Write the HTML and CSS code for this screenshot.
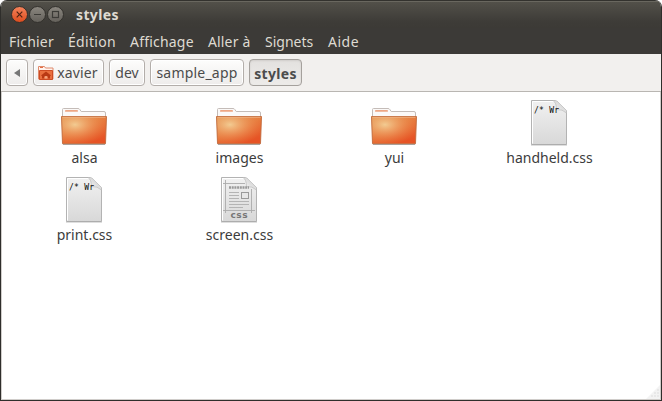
FILE: index.html
```html
<!DOCTYPE html>
<html lang="fr">
<head>
<meta charset="utf-8">
<title>styles</title>
<link rel="stylesheet" href="styles.css">
</head>
<body>
<svg class="defs" width="0" height="0" aria-hidden="true">
  <defs>
    <linearGradient id="folderFill" x1="0" y1="0" x2="0.6" y2="1">
      <stop offset="0" stop-color="#df9853"/><stop offset=".5" stop-color="#e67a3c"/><stop offset="1" stop-color="#e65325"/>
    </linearGradient>
    <radialGradient id="folderGlow" cx=".3" cy=".3" r=".75">
      <stop offset="0" stop-color="#f3cf96" stop-opacity=".95"/><stop offset="1" stop-color="#ef8345" stop-opacity="0"/>
    </radialGradient>
    <linearGradient id="paperFill" x1="0" y1="0" x2="0" y2="1">
      <stop offset="0" stop-color="#f1f1f1"/><stop offset="1" stop-color="#d8d8d8"/>
    </linearGradient>
    <linearGradient id="curl" x1="0" y1="1" x2="1" y2="0">
      <stop offset="0" stop-color="#ffffff"/><stop offset="1" stop-color="#c2c2c2"/>
    </linearGradient>
    <symbol id="folder" viewBox="0 0 48 48">
      <path d="M2.500 22V11.500q0-1 1-1H18q1.300 0 2 1.200l1.200 1.800H44q1.500 0 1.500 1.500v9z" fill="#fbf9f8" stroke="#c4bcb8"/>
      <rect x="5" y="12" width="13" height="1.800" rx=".9" fill="#eda684"/>
      <path d="M1.500 18.500h45l-1 27.200H2.500z" fill="url(#folderFill)"/>
      <path d="M1.500 18.500h45l-1 27.200H2.500z" fill="url(#folderGlow)" stroke="#c06a3c" stroke-width=".9"/>
      <path d="M2.500 19.300h43" stroke="#f0b486" stroke-width=".8"/>
      <path d="M3 46.500h42" stroke="#000" stroke-opacity=".3"/>
    </symbol>
    <symbol id="paper" viewBox="0 0 48 48">
      <path d="M6.500 2.500H30L41.500 13v33.500h-35z" fill="url(#paperFill)" stroke="#b3b3b3"/>
      <path d="M7.500 45.500v-42H29" fill="none" stroke="#fff"/>
      <path d="M28 2.500q3.500 2 3.500 9 6-.5 10 3.500V12.500L32 3q-1-.5-4-.5z" fill="url(#curl)" stroke="#bbb" stroke-width=".7"/>
      <path d="M6 47.300h36" stroke="#000" stroke-opacity=".16"/>
    </symbol>
  </defs>
</svg>
<div class="window">
  <header class="titlebar">
    <svg class="controls" width="54" height="18" viewBox="0 0 54 18">
      <defs>
        <linearGradient id="closeFill" x1="0" y1="0" x2="0" y2="1"><stop offset="0" stop-color="#f5845c"/><stop offset="1" stop-color="#dc4b1d"/></linearGradient>
        <linearGradient id="btnFill" x1="0" y1="0" x2="0" y2="1"><stop offset="0" stop-color="#8b8780"/><stop offset="1" stop-color="#63605a"/></linearGradient>
      </defs>
      <circle cx="9.500" cy="8.500" r="8" fill="url(#closeFill)" stroke="#32302c"/>
      <path d="M6.700 5.700l5.600 5.600m0-5.600l-5.600 5.600" stroke="#512313" stroke-width="1.200"/>
      <circle cx="27.500" cy="8.500" r="8" fill="url(#btnFill)" stroke="#32302c"/>
      <path d="M24 8.500h7" stroke="#3c3b37" stroke-width="1.200"/>
      <circle cx="45.500" cy="8.500" r="8" fill="url(#btnFill)" stroke="#32302c"/>
      <rect x="42.500" y="5.500" width="6" height="6" fill="none" stroke="#3c3b37" stroke-width="1.200"/>
    </svg>
    <h1 class="title">styles</h1>
  </header>
  <nav class="menubar">
    <span>Fichier</span><span>Édition</span><span>Affichage</span><span>Aller à</span><span>Signets</span><span>Aide</span>
  </nav>
  <div class="pathbar">
    <button class="crumb back"><svg width="6" height="8" viewBox="0 0 6 8"><path d="M6 0v8L0 4z" fill="#777"/></svg></button>
    <button class="crumb home">
      <svg width="16" height="16" viewBox="0 0 16 16">
        <path d="M.5 14V1.500h6l1 1.500h7.500v11z" fill="#fff3ed" stroke="#df8a6c"/>
        <path d="M2 2.500h3" stroke="#e46d43"/>
        <path d="M1.500 5.500h13v9h-13z" fill="#e9703f" stroke="#cd4c23"/>
        <path d="M3 10.500L8 6.500l5 4-1 .5v2.500H9.500V11h-3v2.500H4V11z" fill="#b93a14"/>
        <path d="M6.500 13.500v-1.500q1.500-2 3 0v1.500z" fill="#f8a47e"/>
      </svg><span>xavier</span>
    </button>
    <button class="crumb dev">dev</button>
    <button class="crumb sample">sample_app</button>
    <button class="crumb active">styles</button>
  </div>
  <main class="files">
    <div class="file"><svg class="icon"><use href="#folder"/></svg><span>alsa</span></div>
    <div class="file"><svg class="icon"><use href="#folder"/></svg><span>images</span></div>
    <div class="file"><svg class="icon"><use href="#folder"/></svg><span>yui</span></div>
    <div class="file"><svg class="icon" viewBox="0 0 48 48"><use href="#paper"/><text class="preview" x="9" y="15" textLength="25">/* Wr</text></svg><span>handheld.css</span></div>
    <div class="file"><svg class="icon" viewBox="0 0 48 48"><use href="#paper"/><text class="preview" x="9" y="15" textLength="25">/* Wr</text></svg><span>print.css</span></div>
    <div class="file"><svg class="icon" viewBox="0 0 48 48"><use href="#paper"/>
      <path d="M10.500 5v33M36.500 14v24M8 8.500h22M8 35.500h32" stroke="#aaa" stroke-width=".9"/>
      <path d="M14 12.500h20" stroke="#999" stroke-width="2.500" stroke-dasharray="2 .7"/>
      <path d="M14 17.500h10M14 20.500h10M14 23.500h10M14 26.500h20M14 29.500h20M14 32.500h14" stroke="#b4b4b4"/>
      <rect x="26.500" y="17.500" width="7" height="6" fill="#e6e6e6" stroke="#999"/>
      <text class="badge" x="15.500" y="43" textLength="17">css</text></svg><span>screen.css</span></div>
    <svg class="grip" width="14" height="14" viewBox="0 0 14 14"><path d="M14 0v14H0z" fill="#f3f3f3"/><path d="M11 5h2M8 8h2m1 0h2M5 11h2m1 0h2m1 0h2" stroke="#ddd" stroke-width="1.200"/></svg>
  </main>
</div>
</body>
</html>
```

FILE: styles.css
```css
* { box-sizing: border-box; }
body {
  margin: 0;
  background: #fff;
  font-family: "Noto Sans", "Open Sans", sans-serif;
  font-size: 14px;
  color: #3c3c3c;
}
.defs { position: absolute; }
.window {
  display: flex;
  flex-direction: column;
  width: 662px;
  height: 401px;
  border: solid #2f2e2b;
  border-width: 0 1px 1px;
  border-radius: 7px 7px 0 0;
  overflow: hidden;
}
.titlebar {
  display: flex;
  align-items: center;
  height: 28px;
  padding: 1px 0 0 9px;
  background: linear-gradient(#53514a, #3e3c38 75%, #3c3a36);
  border-top: 1px solid #33322e;
  box-shadow: inset 0 1px #69675f;
}
.controls { overflow: visible; }
.title {
  margin: 0 0 0 12px;
  font-size: 14px;
  line-height: 20px;
  letter-spacing: .35px;
  color: #dfdbd2;
}
.menubar {
  display: flex;
  gap: 14px;
  height: 26px;
  padding-left: 8px;
  line-height: 27px;
  background: #3c3a37;
  color: #dfdbd2;
  white-space: nowrap;
}
.menubar span:nth-child(1) { width: 45px; letter-spacing: .2px; }
.menubar span:nth-child(2) { width: 48px; letter-spacing: .3px; }
.menubar span:nth-child(3) { width: 64px; letter-spacing: .2px; }
.menubar span:nth-child(4) { width: 43px; letter-spacing: .15px; }
.menubar span:nth-child(5) { width: 49px; }
.menubar span:nth-child(6) { letter-spacing: .5px; }
.pathbar {
  display: flex;
  gap: 5px;
  height: 38px;
  padding: 5px 5px;
  background: #f2f0ee;
  border-bottom: 1px solid #b9b6b2;
}
.crumb {
  display: flex;
  align-items: center;
  justify-content: center;
  height: 27px;
  padding: 0;
  border: 1px solid #b3aeaa;
  border-radius: 4px;
  background: linear-gradient(#fdfdfc, #eeeceb);
  box-shadow: inset 0 0 0 1px #fff;
  font: inherit;
  color: #4c4c4c;
  white-space: nowrap;
}
.back { width: 22px; }
.home { width: 71px; gap: 3px; padding-right: 1px; letter-spacing: .1px; }
.dev { width: 36px; letter-spacing: .1px; }
.sample { width: 94px; letter-spacing: .2px; }
.active {
  width: 53px;
  padding-top: 2px;
  border-color: #a5a19d;
  background: linear-gradient(#e3e1df, #edebe9);
  box-shadow: inset 0 1px 2px #d0cdca;
  font-weight: bold;
  letter-spacing: .3px;
}
.files {
  position: relative;
  display: grid;
  grid-template-columns: repeat(4, 155px);
  grid-auto-rows: 77px;
  align-content: start;
  flex: 1;
  padding: 6px 0 0 4px;
  background: #fff;
  border: solid #d0cdca;
  border-width: 0 1px 1px;
}
.file {
  display: flex;
  flex-direction: column;
  align-items: center;
}
.file span { line-height: 20px; margin-top: 2px; padding-left: 2px; }
.icon { width: 48px; height: 48px; }
.preview { font: 8px "DejaVu Sans Mono", monospace; fill: #000; }
.badge { font: bold 9px "DejaVu Sans", sans-serif; fill: #777; }
.grip { position: absolute; right: 0; bottom: 0; }
```
